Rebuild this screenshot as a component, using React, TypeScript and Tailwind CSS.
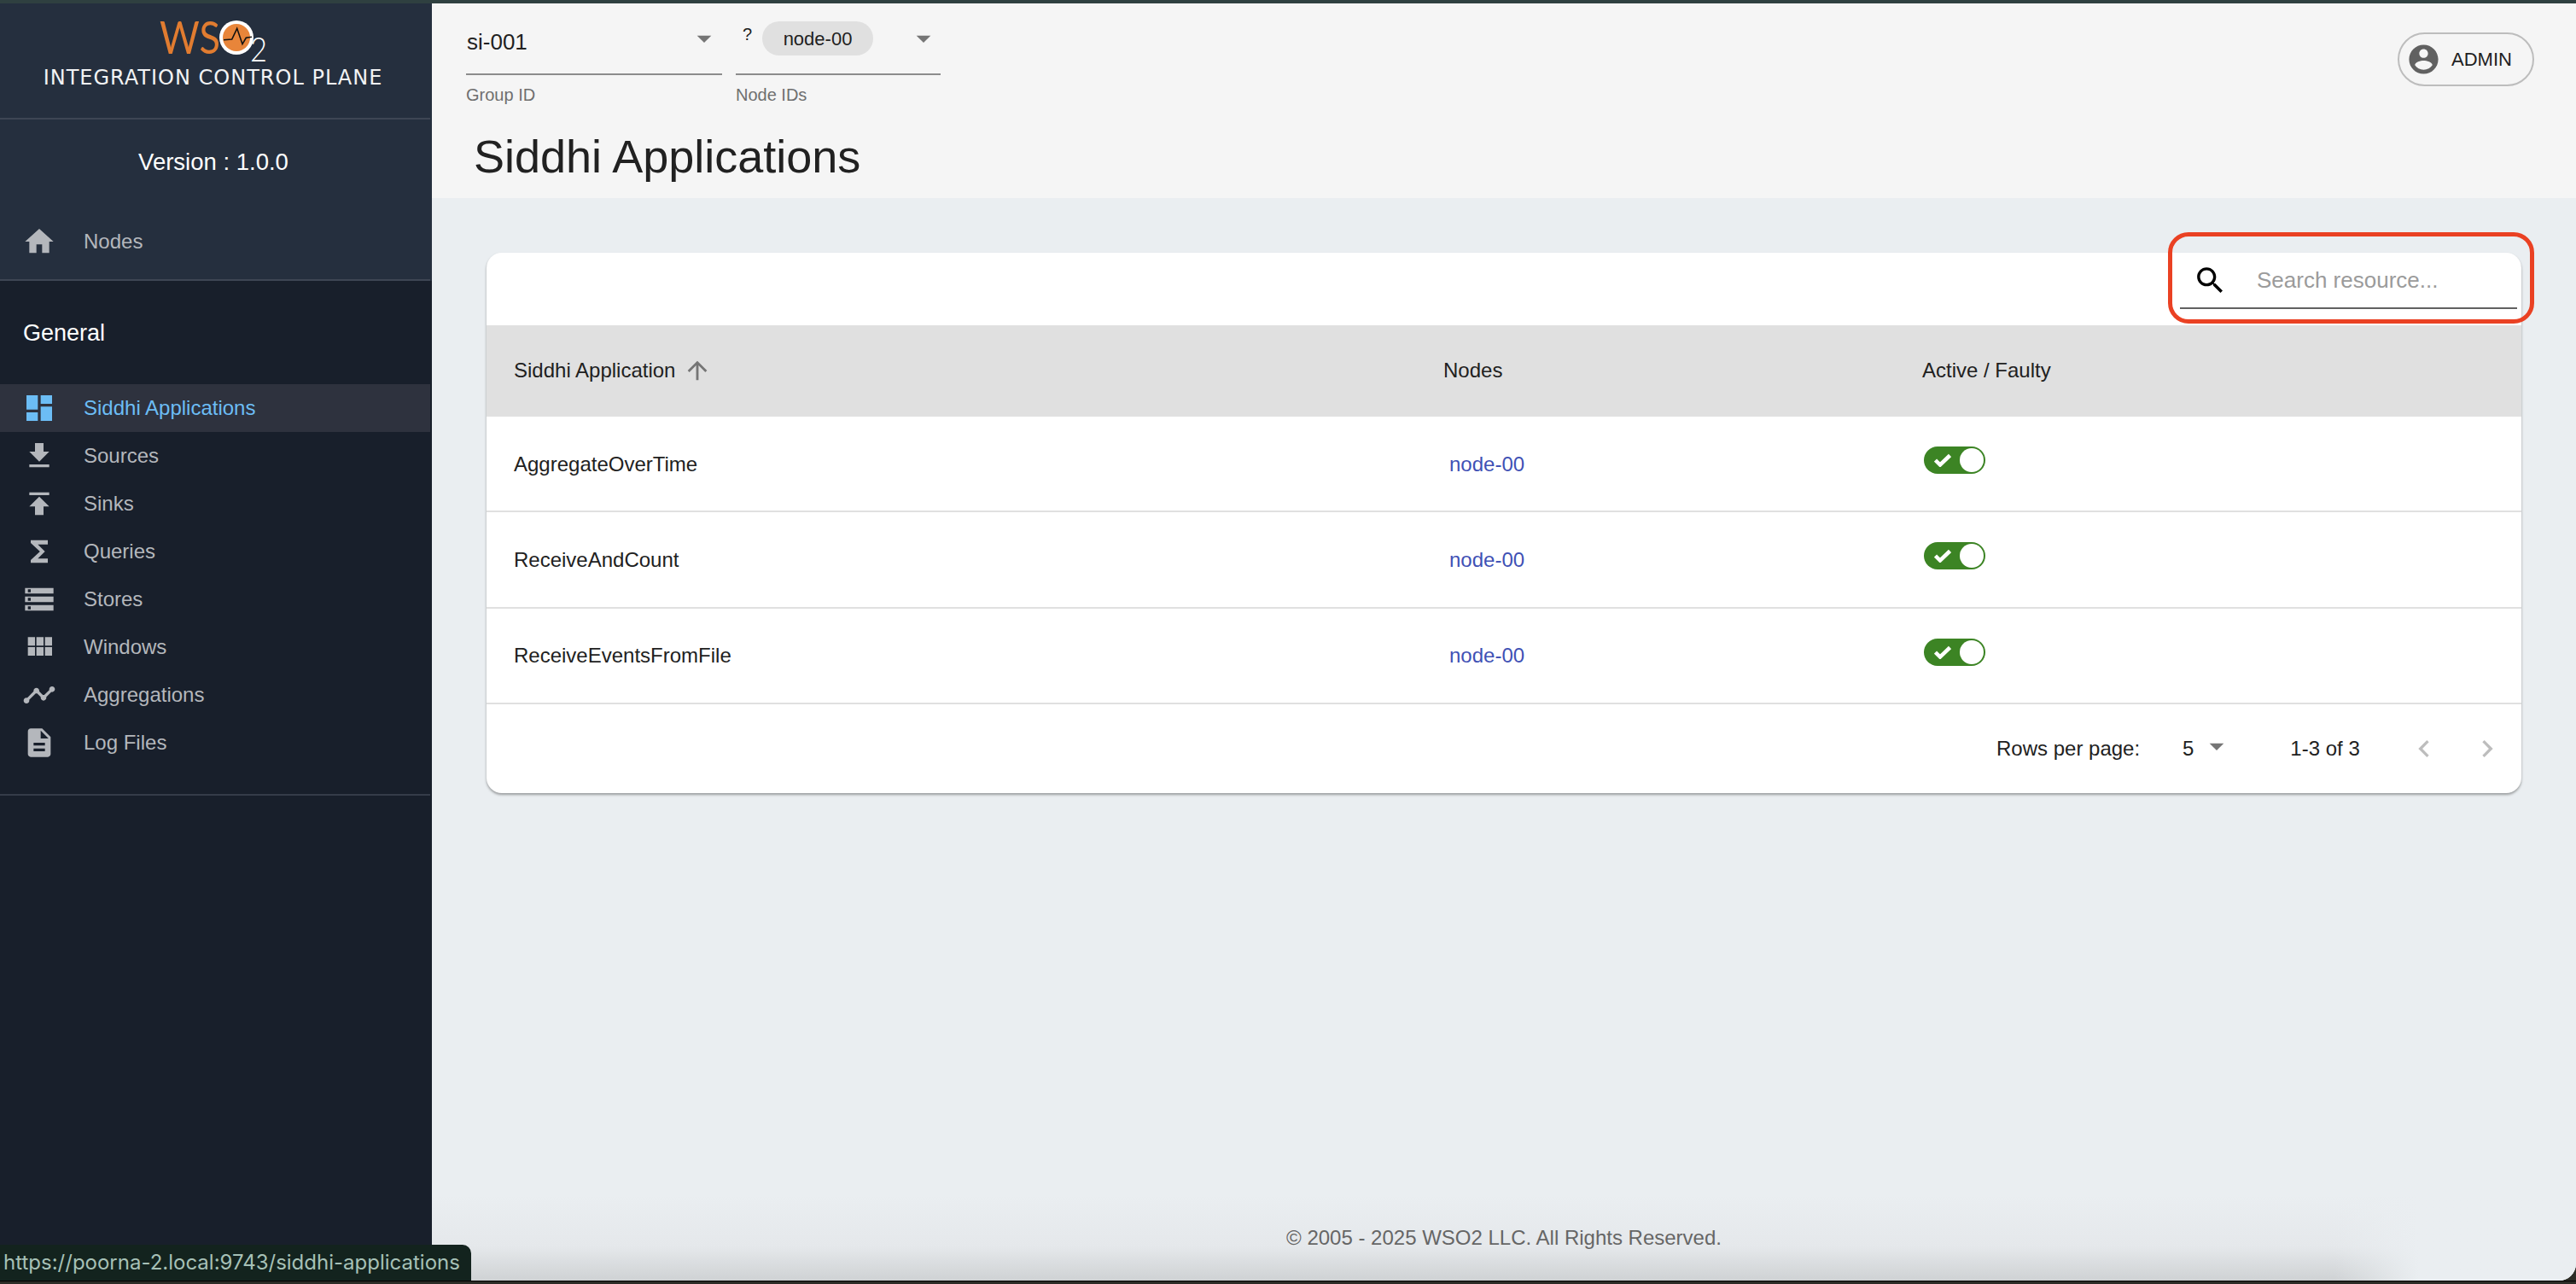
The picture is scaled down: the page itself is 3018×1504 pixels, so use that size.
const sans = "font-['Liberation_Sans',sans-serif]";

const icons: Record<string, string> = {
  home: "M10 20v-6h4v6h5v-8h3L12 3 2 12h3v8z",
  dashboard: "M3 13h8V3H3v10zm0 8h8v-6H3v6zm10 0h8V11h-8v10zm0-18v6h8V3h-8z",
  sources: "M19 9h-4V3H9v6H5l7 7 7-7zM5 18v2h14v-2H5z",
  sinks: "M5 4v2h14V4H5zm0 10h4v6h6v-6h4l-7-7-7 7z",
  queries: "M18 4H6v2l6.5 6L6 18v2h12v-3h-7l5-5-5-5h7z",
  stores:
    "M2 20h20v-4H2v4zm2-3h2v2H4v-2zM2 4v4h20V4H2zm4 3H4V5h2v2zm-4 7h20v-4H2v4zm2-3h2v2H4v-2z",
  windows:
    "M4 11h5V5H4v6zm0 7h5v-6H4v6zm6 0h5v-6h-5v6zm6 0h5v-6h-5v6zm-6-7h5V5h-5v6zm6-6v6h5V5h-5z",
  timeline:
    "M23 8c0 1.1-.9 2-2 2-.18 0-.35-.02-.51-.07l-3.56 3.55c.05.16.07.34.07.52 0 1.1-.9 2-2 2s-2-.9-2-2c0-.18.02-.36.07-.52l-2.55-2.55c-.16.05-.34.07-.52.07s-.36-.02-.52-.07l-4.55 4.56c.05.16.07.33.07.51 0 1.1-.9 2-2 2s-2-.9-2-2 .9-2 2-2c.18 0 .35.02.51.07l4.56-4.55C8.02 9.36 8 9.18 8 9c0-1.1.9-2 2-2s2 .9 2 2c0 .18-.02.36-.07.52l2.55 2.55c.16-.05.34-.07.52-.07s.36.02.52.07l3.55-3.56C19.02 8.35 19 8.18 19 8c0-1.1.9-2 2-2s2 .9 2 2z",
  file: "M14 2H6c-1.1 0-1.99.9-1.99 2L4 20c0 1.1.89 2 1.99 2H18c1.1 0 2-.9 2-2V8l-6-6zm2 16H8v-2h8v2zm0-4H8v-2h8v2zm-3-5V3.5L18.5 9H13z",
  account:
    "M12 2C6.48 2 2 6.48 2 12s4.48 10 10 10 10-4.48 10-10S17.52 2 12 2zm0 3c1.66 0 3 1.34 3 3s-1.34 3-3 3-3-1.34-3-3 1.34-3 3-3zm0 14.2c-2.5 0-4.71-1.28-6-3.22.03-1.99 4-3.08 6-3.08 1.99 0 5.97 1.09 6 3.08-1.29 1.94-3.5 3.22-6 3.22z",
  search:
    "M15.5 14h-.79l-.28-.27C15.41 12.59 16 11.11 16 9.5 16 5.91 13.09 3 9.5 3S3 5.91 3 9.5 5.91 16 9.5 16c1.61 0 3.09-.59 4.23-1.57l.27.28v.79l5 4.99L20.49 19l-4.99-5zm-6 0C7.01 14 5 11.99 5 9.5S7.01 5 9.5 5 14 7.01 14 9.5 11.99 14 9.5 14z",
  arrowUp: "M4 12l1.41 1.41L11 7.83V20h2V7.83l5.58 5.59L20 12l-8-8-8 8z",
  caret: "M7 10l5 5 5-5z",
  left: "M15.41 16.59L10.83 12l4.58-4.59L14 6l-6 6 6 6 1.41-1.41z",
  right: "M8.59 16.59L13.17 12 8.59 7.41 10 6l6 6-6 6-1.41-1.41z",
};

function Icon({ name, className }: { name: string; className: string }) {
  return (
    <svg viewBox="0 0 24 24" className={className} fill="currentColor">
      <path d={icons[name]} />
    </svg>
  );
}

function Logo() {
  return (
    <svg viewBox="0 0 132 54" className="h-[54px] w-[132px] overflow-visible">
      <text
        x="3"
        y="41"
        textLength="71"
        lengthAdjust="spacingAndGlyphs"
        fontFamily="Lato, sans-serif"
        fontWeight="400"
        fontSize="52"
        fill="#e17c30"
      >
        WS
      </text>
      <circle cx="93" cy="22" r="20" fill="#ffffff" />
      <circle cx="93" cy="22" r="16" fill="#e8853a" />
      <polyline
        points="78,24.7 87.7,24 93.7,11.3 100,29.7 104.3,22.3 111,21.3"
        fill="none"
        stroke="#111111"
        strokeWidth="1.6"
      />
      <text
        x="109"
        y="50"
        textLength="20"
        lengthAdjust="spacingAndGlyphs"
        fontFamily="Lato, sans-serif"
        fontWeight="300"
        fontSize="40"
        fill="#ffffff"
      >
        2
      </text>
    </svg>
  );
}

const navItems = [
  { label: "Siddhi Applications", icon: "dashboard", active: true },
  { label: "Sources", icon: "sources" },
  { label: "Sinks", icon: "sinks" },
  { label: "Queries", icon: "queries" },
  { label: "Stores", icon: "stores" },
  { label: "Windows", icon: "windows" },
  { label: "Aggregations", icon: "timeline" },
  { label: "Log Files", icon: "file" },
];

function NavRow({ label, icon, active }: { label: string; icon: string; active?: boolean }) {
  return (
    <div
      className={`flex h-[56px] w-[504px] items-center gap-[32px] pl-[26px] text-[24px] ${
        active ? "bg-[#2e323e] text-[#6cbdf5]" : "text-[#b4b7bc]"
      }`}
    >
      <Icon name={icon} className="h-[40px] w-[40px]" />
      <span>{label}</span>
    </div>
  );
}

function Sidebar() {
  return (
    <aside className={`flex w-[506px] flex-col bg-[#181f2b] ${sans}`}>
      <div className="bg-[#252f3e]">
        <div className="h-[134px] pl-[184px] pt-[18px]">
          <Logo />
          <div className="-ml-[184px] w-[499px] whitespace-nowrap text-center font-['DejaVu_Sans',sans-serif] text-[24px] leading-[30px] tracking-[1px] text-[#f2f3f4]">
            INTEGRATION CONTROL PLANE
          </div>
        </div>
        <div className="h-[2px] w-[504px] bg-[#3e4654]" />
        <div className="h-[115px] w-[500px] pt-[26px] text-center text-[27.5px] leading-[48px] text-white">
          Version : 1.0.0
        </div>
        <NavRow label="Nodes" icon="home" />
        <div className="h-[16px]" />
        <div className="h-[2px] w-[504px] bg-[#3e4654]" />
      </div>
      <div className="pl-[27px] pt-[45px] text-[27px] leading-[32px] text-white">General</div>
      <nav className="mt-[44px]">
        {navItems.map((item) => (
          <NavRow key={item.label} {...item} />
        ))}
      </nav>
      <div className="mt-[32px] h-[2px] w-[504px] bg-[#353c49]" />
    </aside>
  );
}

function SelectBox({ width, children }: { width: string; children: React.ReactNode }) {
  return (
    <div className={`flex h-[84px] items-center justify-between border-b-2 border-[#8c8c8c] ${width}`}>
      {children}
    </div>
  );
}

function Header() {
  return (
    <header className={`flex h-[228px] justify-between bg-[#f5f5f5] ${sans}`}>
      <div className="pl-[40px]">
        <div className="flex gap-[16px]">
          <div>
            <SelectBox width="w-[300px]">
              <span className="pl-[1px] pt-[8px] text-[26px] text-[#212121]">si-001</span>
              <Icon name="caret" className="mr-[1px] h-[40px] w-[40px] text-[#757575]" />
            </SelectBox>
            <div className="mt-[11px] text-[20px] leading-[24px] text-[#6f6f6f]">Group ID</div>
          </div>
          <div>
            <SelectBox width="w-[240px]">
              <div className="flex items-center">
                <span className="-mt-[10px] ml-[8px] w-[23px] text-[20px] text-[#212121]">?</span>
                <span className="flex h-[40px] w-[130px] items-center justify-center rounded-full bg-[#e0e0e0] text-[22px] text-[#212121]">
                  node-00
                </span>
              </div>
              <Icon name="caret" className="h-[40px] w-[40px] text-[#757575]" />
            </SelectBox>
            <div className="mt-[11px] text-[20px] leading-[24px] text-[#6f6f6f]">Node IDs</div>
          </div>
        </div>
        <h1 className="ml-[9px] mt-[28px] text-[54px] font-normal leading-[65px] text-[#212121]">
          Siddhi Applications
        </h1>
      </div>
      <div className="pr-[49px] pt-[34px]">
        <button className="flex h-[63px] w-[160px] items-center rounded-full border-2 border-[#bdbdbd] pl-[8px] text-[22px] text-[#212121]">
          <Icon name="account" className="h-[41px] w-[41px] text-[#616161]" />
          <span className="ml-[12px]">ADMIN</span>
        </button>
      </div>
    </header>
  );
}

const rows = ["AggregateOverTime", "ReceiveAndCount", "ReceiveEventsFromFile"];

function Toggle() {
  return (
    <div className="flex h-[32px] w-[72px] items-center justify-between rounded-full bg-[#3c8424] pl-[12px] pr-[2px]">
      <svg viewBox="0 0 20 16" className="h-[16px] w-[20px]" fill="none" stroke="#ffffff" strokeWidth="4.5">
        <path d="M1.5 8l5.5 5.5L18.5 2.5" />
      </svg>
      <span className="h-[28px] w-[28px] rounded-full bg-white" />
    </div>
  );
}

function AppTable() {
  return (
    <div className="relative flex h-[633px] flex-col rounded-[18px] bg-white text-[24px] text-[#212121] shadow-[0_2px_3px_rgba(0,0,0,0.35)]">
      <div className="flex h-[85px] justify-end">
        <div className="mr-[5px] flex h-[66px] w-[395px] items-center gap-[34px] border-b-2 border-[#616161] pl-[15px]">
          <Icon name="search" className="h-[41px] w-[41px] shrink-0 text-black" />
          <input
            placeholder="Search resource..."
            className="w-full bg-transparent text-[26px] text-[#212121] outline-none placeholder:text-[#9b9b9b]"
          />
        </div>
      </div>
      <div className="grid h-[107px] grid-cols-[1090px_561px_1fr] items-center bg-[#e0e0e0] pb-[2px] pl-[32px]">
        <div className="flex items-center gap-[9px]">
          <span>Siddhi Application</span>
          <Icon name="arrowUp" className="h-[34px] w-[34px] text-[#757575]" />
        </div>
        <div className="-ml-[32px] pl-[31px]">Nodes</div>
        <div className="-ml-[32px] pl-[31px]">Active / Faulty</div>
      </div>
      {rows.map((name) => (
        <div
          key={name}
          className="grid h-[112.33px] grid-cols-[1090px_561px_1fr] items-center border-b-2 border-[#e0e0e0] pl-[32px]"
        >
          <div className="pt-[1px]">{name}</div>
          <div className="-ml-[26px] pl-[32px] pt-[1px] text-[#3f51b5]">node-00</div>
          <div className="-ml-[31px] pb-[8px] pl-[32px]">
            <Toggle />
          </div>
        </div>
      ))}
      <div className="flex flex-1 items-center whitespace-nowrap pl-[1769px]">
        <span className="w-[218px]">Rows per page:</span>
        <span>5</span>
        <Icon name="caret" className="-mt-[6px] ml-[7px] h-[40px] w-[40px] text-[#757575]" />
        <span className="ml-[66px] w-[80px]">1-3 of 3</span>
        <Icon name="left" className="ml-[57px] h-[40px] w-[40px] text-[#bdbdbd]" />
        <Icon name="right" className="ml-[34px] h-[40px] w-[40px] text-[#bdbdbd]" />
      </div>
      {/* red callout around the search box */}
      <div className="absolute left-[1970px] top-[-24px] h-[107px] w-[429px] rounded-[24px] border-[5px] border-[#ea4123]" />
    </div>
  );
}

export default function App() {
  return (
    <div className="relative flex h-[1504px] w-[3018px] flex-col overflow-hidden bg-[#2c2c26]">
      <div className="h-[4px] bg-[#2f4040]" />
      <div className="flex min-h-0 flex-1">
        <Sidebar />
        <main
          className={`relative flex min-w-0 flex-1 flex-col overflow-hidden rounded-br-[20px] bg-[#eaeef1] ${sans}`}
        >
          <Header />
          <div className="flex-1 px-[64px] pt-[64px]">
            <AppTable />
          </div>
          <div className="h-[100px] bg-gradient-to-b from-[#eaeef1] via-[#e5e8eb] via-60% to-[#cfd2d4] pt-[34px] text-center text-[24px] leading-[32px] text-[#666666]">
            © 2005 - 2025 WSO2 LLC. All Rights Reserved.
          </div>
          {/* the shadow along the bottom fades out towards the right */}
          <div className="absolute bottom-0 right-0 h-[100px] w-[283px] bg-gradient-to-r from-transparent to-[#eaeef1] to-[35%]" />
        </main>
      </div>
      <div className="h-[4px] border-t border-black" />
      {/* browser link preview */}
      <div className="absolute bottom-[4px] left-0 flex h-[42px] w-[552px] items-center rounded-tr-[10px] bg-[#13231e] pl-[4px] font-['Inter',sans-serif] text-[24px] text-[#a6c0b6]">
        https://poorna-2.local:9743/siddhi-applications
      </div>
    </div>
  );
}
